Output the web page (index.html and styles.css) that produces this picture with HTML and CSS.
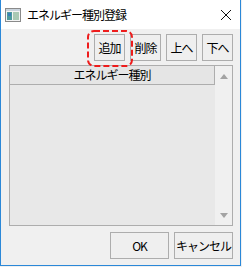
FILE: index.html
```html
<!DOCTYPE html>
<html lang="ja">
<head>
    <meta charset="UTF-8">
    <title>エネルギー種別登録</title>
    <link rel="stylesheet" href="styles.css">
</head>
<body>
    <div class="window">
        <!-- タイトルバー -->
        <div class="titlebar">
            <svg class="app-icon" width="16" height="16" viewBox="0 0 16 16">
                <rect x="0.5" y="1.5" width="15" height="13" fill="#f4f4f4" stroke="#8a8a8a"/>
                <rect x="1" y="2" width="14" height="2" fill="#c9d3dc"/>
                <rect x="2" y="5" width="5" height="8" fill="#4d9a9c"/>
                <rect x="8" y="5" width="6" height="8" fill="#a9c9b4"/>
                <rect x="3" y="6" width="3" height="3" fill="#3b7fb8"/>
            </svg>
            <span class="title">エネルギー種別登録</span>
            <svg class="close-icon" width="12" height="12" viewBox="0 0 12 12">
                <path d="M1 1 L11 11 M11 1 L1 11" stroke="#111" stroke-width="1" fill="none"/>
            </svg>
        </div>

        <!-- 本体 -->
        <div class="content">
            <div class="toolbar">
                <button class="btn small highlight">追加
                    <svg class="mark" width="46" height="37" viewBox="0 0 46 37">
                        <rect x="1" y="1" width="44" height="35" rx="6" fill="none" stroke="#ee1c1c" stroke-width="2" stroke-dasharray="6 3"/>
                    </svg>
                </button>
                <button class="btn small">削除</button>
                <button class="btn small">上へ</button>
                <button class="btn small">下へ</button>
            </div>

            <div class="list">
                <div class="list-main">
                    <div class="list-header">エネルギー種別</div>
                    <div class="list-body"></div>
                </div>
                <div class="scrollbar">
                    <span class="arrow up"></span>
                    <span class="arrow down"></span>
                </div>
            </div>

            <div class="footer">
                <button class="btn wide">OK</button>
                <button class="btn wide">キャンセル</button>
            </div>
        </div>
    </div>
</body>
</html>
```

FILE: styles.css
```css
body {
    margin: 0;
    background: #f0f0f0;
    font-family: "Noto Sans CJK JP", "Noto Sans", sans-serif;
    font-size: 12px;
    color: #000;
}
.window {
    width: 239px;
    height: 265px;
    border: 1px solid #2b88d8;
    border-top: none;
    background: #f0f0f0;
    display: flex;
    flex-direction: column;
}
.titlebar {
    height: 29px;
    background: #fff;
    display: flex;
    align-items: center;
    padding: 0 8px 0 4px;
}
.app-icon {
    flex: none;
}
.title {
    margin-left: 6px;
    letter-spacing: -1px;
    flex: 1;
}
.close-icon {
    flex: none;
}
.content {
    flex: 1;
    display: flex;
    flex-direction: column;
    padding: 5px 7px 6px 8px;
}
.toolbar {
    display: flex;
    justify-content: flex-end;
    gap: 5px;
}
.btn {
    font-family: inherit;
    font-size: 12px;
    background: #efefef;
    border: 1px solid #adadad;
    padding: 0;
    height: 27px;
    color: #000;
    letter-spacing: -1px;
}
.btn.small {
    width: 31px;
}
.btn.wide {
    width: 59px;
}
/* 注目枠 */
.highlight {
    position: relative;
}
.highlight .mark {
    position: absolute;
    top: -5px;
    left: -8px;
}
.list {
    margin-top: 4px;
    height: 159px;
    border: 1px solid #adadad;
    display: flex;
}
.list-main {
    flex: 1;
    display: flex;
    flex-direction: column;
}
.list-header {
    height: 18px;
    line-height: 18px;
    background: #e5e5e5;
    border-bottom: 1px solid #adadad;
    border-right: 1px solid #adadad;
    text-align: center;
    letter-spacing: -1px;
}
.list-body {
    flex: 1;
    background: #e8e8e8;
}
.scrollbar {
    width: 17px;
    background: #f0f0f0;
    display: flex;
    flex-direction: column;
    justify-content: space-between;
    align-items: center;
    padding: 8px 0 7px;
}
.arrow {
    width: 0;
    height: 0;
    border-left: 4px solid transparent;
    border-right: 4px solid transparent;
}
.arrow.up {
    border-bottom: 5px solid #a3a3a3;
}
.arrow.down {
    border-top: 5px solid #a3a3a3;
}
.footer {
    margin-top: 6px;
    display: flex;
    justify-content: flex-end;
    gap: 5px;
}
```
